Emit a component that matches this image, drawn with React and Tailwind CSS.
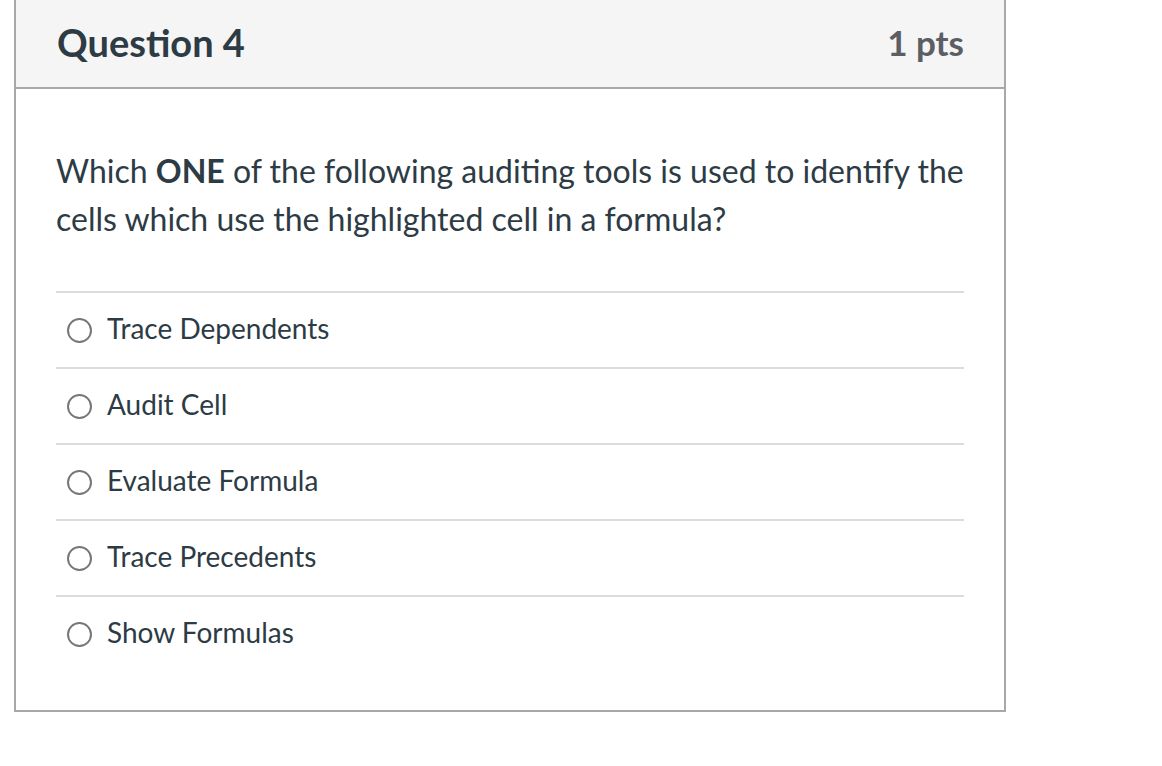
const options = [
  "Trace Dependents",
  "Audit Cell",
  "Evaluate Formula",
  "Trace Precedents",
  "Show Formulas",
]

const App = () => {
  return (
    <div className="min-h-screen bg-white pl-[14px] font-['Lato','Liberation_Sans',sans-serif]">
      <div className="w-[992px] border-2 border-t-0 border-[#a8a8a8] bg-white">
        <div className="flex h-[89px] items-center justify-between border-b-2 border-[#a8a8a8] bg-[#f5f5f5] pb-[2px] pl-[41px] pr-[40px]">
          <h2 className="text-[38px] font-bold text-[#2d3b45]">Question 4</h2>
          <span className="text-[35px] font-bold text-[#5b5e62]">1 pts</span>
        </div>

        <div className="px-10 pt-[58px] pb-[39px]">
          <p className="text-[32px] leading-[48px] text-[#2d3b45]">
            Which <strong className="font-bold">ONE</strong> of the following auditing tools is used to identify the cells which use the highlighted cell in a formula?
          </p>

          <div className="mt-[48px]">
            {options.map((opt) => (
              <label
                key={opt}
                className="flex h-[76px] items-center border-t-2 border-[#dcdcdc] pb-[2px] text-[28px] text-[#2d3b45]"
              >
                <span className="ml-[11px] mr-[15px] mt-[2px] h-[25px] w-[25px] shrink-0 rounded-full border-2 border-[#777777]" />
                <span className="-mt-[2px]">{opt}</span>
              </label>
            ))}
          </div>
        </div>
      </div>
    </div>
  )
}

export default App
